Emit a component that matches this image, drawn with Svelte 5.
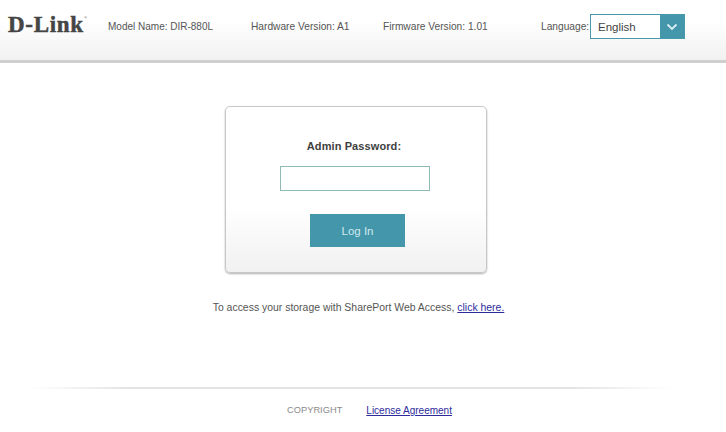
<script>
  let password = $state("");
</script>

<div class="page">
  <header class="top">
    <span class="logo">D-Link<sup>®</sup></span>
    <span class="info model">Model Name: DIR-880L</span>
    <span class="info hw">Hardware Version: A1</span>
    <span class="info fw">Firmware Version: 1.01</span>
    <span class="info lang">Language:</span>
    <div class="select">
      <span class="value">English</span>
      <span class="arrow">
        <svg width="12" height="8" viewBox="0 0 12 8">
          <path d="M1.5 1.5 L6 6 L10.5 1.5" fill="none" stroke="#d8eef2" stroke-width="1.8" />
        </svg>
      </span>
    </div>
  </header>

  <main class="main">
    <div class="card">
      <label class="title" for="pw">Admin Password:</label>
      <input id="pw" class="pw" type="password" bind:value={password} />
      <button class="login">Log In</button>
    </div>
    <p class="share">To access your storage with SharePort Web Access, <a href="#top">click here.</a></p>
  </main>

  <footer class="foot">
    <div class="rule"></div>
    <div class="links">
      <span class="copy">COPYRIGHT</span>
      <a href="#top">License Agreement</a>
    </div>
  </footer>
</div>

<style>
  :global(body) {
    background: #ffffff;
  }
  .page {
    width: 726px;
    height: 432px;
    overflow: hidden;
    font-family: "Liberation Sans", Arial, sans-serif;
    color: #555;
  }
  .top {
    height: 60px;
    box-sizing: content-box;
    display: flex;
    align-items: flex-start;
    background: linear-gradient(#ffffff 0%, #ffffff 35%, #f1f1f1 100%);
    border-bottom: 3px solid #cfcfcf;
  }
  .logo {
    position: relative;
    margin: 12px 0 0 8px;
    width: 100px;
    font-family: "Liberation Serif", serif;
    font-weight: bold;
    font-size: 23px;
    letter-spacing: 0.7px;
    line-height: 26px;
    color: #454545;
    -webkit-text-stroke: 0.5px #454545;
  }
  .logo sup {
    position: absolute;
    left: 76px;
    top: 4px;
    font-size: 4px;
    line-height: 4px;
    font-weight: normal;
    -webkit-text-stroke: 0;
  }
  .info {
    font-size: 10.2px;
    line-height: 14px;
    margin-top: 20px;
    white-space: nowrap;
  }
  .model { width: 143px; font-size: 10px; }
  .hw { width: 132px; }
  .fw { width: 158px; }
  .lang { width: 49px; }
  .select {
    margin-top: 14px;
    width: 95px;
    height: 25px;
    box-sizing: border-box;
    display: flex;
    background: #fff;
    border: 1px solid #4a98ab;
  }
  .value {
    flex: 1;
    padding-left: 7px;
    font-size: 11.5px;
    line-height: 24px;
    color: #444;
  }
  .arrow {
    width: 24px;
    display: flex;
    align-items: center;
    justify-content: center;
    background: #4496ab;
  }
  .main {
    display: flex;
    flex-direction: column;
    align-items: center;
    padding-right: 14px;
  }
  .card {
    margin-top: 43px;
    width: 262px;
    height: 167px;
    box-sizing: border-box;
    border: 1px solid #c8c8c8;
    border-radius: 5px;
    box-shadow: 0 1px 2px #b0b0b0;
    background: linear-gradient(#ffffff 0%, #ffffff 60%, #f1f1f1 100%);
    display: flex;
    flex-direction: column;
    align-items: center;
  }
  .title {
    margin-top: 32px;
    margin-left: -4px;
    font-size: 11px;
    line-height: 15px;
    font-weight: bold;
    color: #3f3f3f;
    letter-spacing: 0.1px;
  }
  .pw {
    margin-top: 12px;
    margin-left: -2px;
    width: 150px;
    height: 25px;
    box-sizing: border-box;
    border: 1px solid #8fbab4;
    background: #fff;
    outline: none;
    padding: 0;
  }
  .login {
    margin-top: 23px;
    margin-left: 3px;
    width: 95px;
    height: 33px;
    border: none;
    background: #4496ab;
    color: #cfe9ee;
    font-family: inherit;
    font-size: 11.5px;
  }
  .share {
    margin: 28px 0 0 5px;
    font-size: 10.45px;
    line-height: 14px;
    color: #555;
  }
  a {
    color: #2c2c9c;
  }
  .foot {
    margin-top: 72px;
  }
  .rule {
    height: 2px;
    margin: 0 55px 0 30px;
    background: linear-gradient(90deg, #ffffff, #e4e4e4 15%, #e4e4e4 85%, #ffffff);
  }
  .links {
    margin-top: 15px;
    display: flex;
    justify-content: center;
    gap: 24px;
    font-size: 10px;
    line-height: 13px;
    padding-left: 13px;
  }
  .copy {
    font-size: 9.3px;
    color: #8a8a8a;
  }
</style>
